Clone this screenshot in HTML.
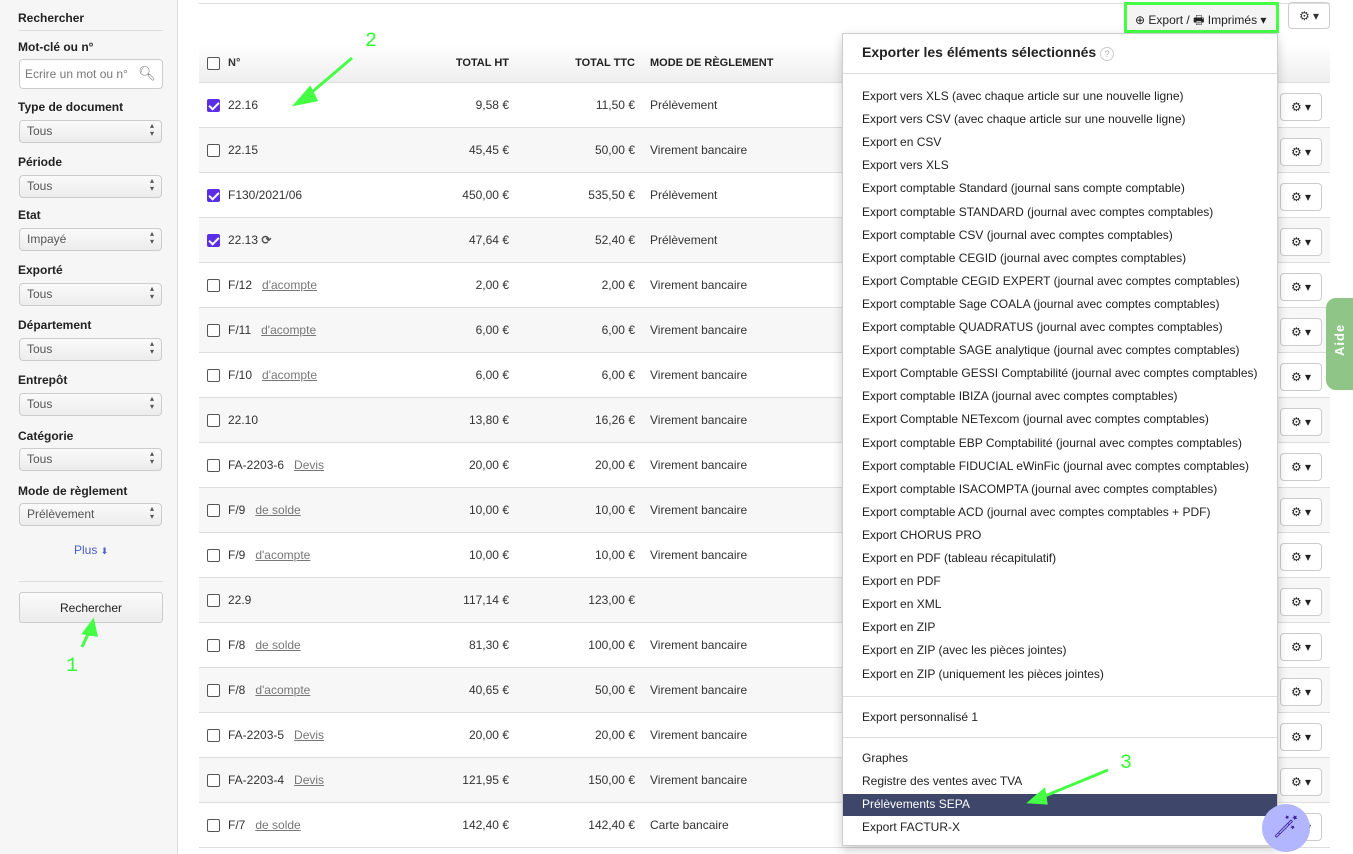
<!DOCTYPE html>
<html><head><meta charset="utf-8"><style>
*{box-sizing:border-box;margin:0;padding:0}
body{width:1353px;height:854px;overflow:hidden;background:#fff;font-family:"Liberation Sans",Arial,sans-serif;font-size:12px;color:#333;position:relative}
.side{position:absolute;left:0;top:0;width:178px;height:854px;background:#f6f6f6;border-right:1px solid #ddd}
.lbl{position:absolute;left:18px;font-weight:bold;font-size:12px;color:#222}
.sel{position:absolute;left:19px;width:143px;height:23px;border:1px solid #ccc;border-radius:4px;background:linear-gradient(#fafafa,#ececec);font-size:12px;color:#555;padding:3px 0 0 7px}
.sel:after{content:"▴\A▾";white-space:pre;position:absolute;right:7px;top:1px;font-size:8px;line-height:8px;color:#555}
.abs{position:absolute}
.row{position:absolute;left:199px;width:1131px;height:45px;border-bottom:1px solid #ddd}
.row.g{background:#f7f7f7}
.cb{position:absolute;left:8px;top:16px;width:13px;height:13px;border:1px solid #555;border-radius:2px;background:#fff}
.cb.on{background:#5a2ee6;border-color:#5a2ee6}
.cb.on:after{content:"";position:absolute;left:3px;top:0px;width:4px;height:8px;border:solid #fff;border-width:0 2px 2px 0;transform:rotate(45deg)}
.num{position:absolute;left:29px;top:15px;color:#333}
.lk{color:#777;text-decoration:underline;margin-left:10px}
.ht{position:absolute;right:821px;top:15px}
.ttc{position:absolute;right:695px;top:15px}
.mode{position:absolute;left:451px;top:15px}
.gear{position:absolute;left:1081px;top:10px;width:42px;height:28px;border:1px solid #ccc;border-radius:4px;background:#fff;font-size:12px;text-align:center;padding-top:6px;color:#222}
.dd{position:absolute;left:842px;top:33px;width:436px;height:813px;background:#fff;border:1px solid #ccc;box-shadow:0 4px 10px rgba(0,0,0,.2)}
.it{position:absolute;left:19px;font-size:12px;color:#222;white-space:nowrap}
.sep{position:absolute;left:0;width:100%;border-top:1px solid #ddd}
.gr{color:#3f3;font-family:"Liberation Mono",monospace;font-size:20px}
</style></head><body>
<div class="side">
<div class="lbl" style="top:11px">Rechercher</div>
<div class="abs" style="left:19px;top:30px;width:144px;border-top:1px solid #ddd"></div>
<div class="lbl" style="top:40px">Mot-clé ou n°</div>
<div class="abs" style="left:19px;top:59px;width:144px;height:30px;border:1px solid #ccc;border-radius:4px;background:#fff;color:#777;padding:7px 0 0 5px">Ecrire un mot ou n°<span style="position:absolute;right:6px;top:5px;font-size:14px;color:#777">&#x1F50D;&#xFE0E;</span></div>
<div class="lbl" style="top:100px">Type de document</div><div class="sel" style="top:120px">Tous</div>
<div class="lbl" style="top:155px">Période</div><div class="sel" style="top:175px">Tous</div>
<div class="lbl" style="top:208px">Etat</div><div class="sel" style="top:228px">Impayé</div>
<div class="lbl" style="top:263px">Exporté</div><div class="sel" style="top:283px">Tous</div>
<div class="lbl" style="top:318px">Département</div><div class="sel" style="top:338px">Tous</div>
<div class="lbl" style="top:373px">Entrepôt</div><div class="sel" style="top:393px">Tous</div>
<div class="lbl" style="top:429px">Catégorie</div><div class="sel" style="top:448px">Tous</div>
<div class="lbl" style="top:484px">Mode de règlement</div><div class="sel" style="top:503px">Prélèvement</div>
<div class="abs" style="left:74px;top:543px;color:#4a5fc1">Plus <span style="font-size:9px">⬇</span></div>
<div class="abs" style="left:19px;top:581px;width:144px;border-top:1px solid #ddd"></div>
<div class="abs" style="left:19px;top:592px;width:144px;height:31px;border:1px solid #ccc;border-radius:3px;background:linear-gradient(#fafafa,#ececec);text-align:center;padding-top:8px;color:#222">Rechercher</div>
</div>
<div class="abs" style="left:199px;top:0;width:1131px;height:4px;border-bottom:1px solid #ddd"></div>
<div class="abs" style="left:1124px;top:2px;width:155px;height:31px;border:3px solid #4f4;background:#f4f4f4;padding:6px 0 0 8px;color:#222">⊕ Export / 🖶&#xFE0E; Imprimés ▾</div>
<div class="abs" style="left:1288px;top:2px;width:42px;height:27px;border:1px solid #ccc;border-radius:4px;text-align:center;padding-top:6px">⚙ ▾</div>
<div class="row" style="top:45px;height:38px;background:linear-gradient(#fff,#eee);font-weight:bold;font-size:11px;color:#222">
<div class="cb" style="top:12px"></div><div class="num" style="top:12px">N°</div>
<div class="ht" style="top:12px">TOTAL HT</div><div class="ttc" style="top:12px">TOTAL TTC</div><div class="mode" style="top:12px">MODE DE RÈGLEMENT</div></div>
<div id="rows"></div>
<div class="abs" style="left:1326px;top:298px;width:27px;height:92px;background:#8fc586;border-radius:10px 0 0 10px;color:#fff;font-weight:bold;font-size:13px"><div style="position:absolute;left:6px;top:58px;transform:rotate(-90deg);transform-origin:0 0;letter-spacing:1px">Aide</div></div>
<div class="dd">
<div class="abs" style="left:19px;top:10px;font-weight:bold;font-size:14px;color:#222">Exporter les éléments sélectionnés <span style="display:inline-block;width:14px;height:14px;border:1px solid #ccc;border-radius:7px;font-size:9px;color:#aaa;text-align:center;font-weight:normal;line-height:12px">?</span></div>
<div class="sep" style="top:39px"></div>
<div id="items"></div>
<div class="sep" style="top:662px"></div>
<div class="it" style="top:676px">Export personnalisé 1</div>
<div class="sep" style="top:703px"></div>
<div class="it" style="top:717px">Graphes</div>
<div class="it" style="top:740px">Registre des ventes avec TVA</div>
<div class="abs" style="left:0;top:760px;width:100%;height:22px;background:#3e4669"></div>
<div class="it" style="top:763px;color:#fff">Prélèvements SEPA</div>
<div class="it" style="top:786px">Export FACTUR-X</div>
</div>
<div class="abs" style="left:1262px;top:804px;width:48px;height:48px;border-radius:24px;background:#b2b6ff;color:#3a1f9a;font-size:22px;text-align:center;padding-top:10px">🪄&#xFE0E;</div>
<div class="abs gr" style="left:365px;top:30px">2</div>
<div class="abs gr" style="left:66px;top:655px">1</div>
<div class="abs gr" style="left:1120px;top:752px">3</div>
<svg class="abs" style="left:0;top:0" width="1353" height="854"><g stroke="#4f4" stroke-width="3" fill="#4f4">
<line x1="352" y1="58" x2="305" y2="98"/><polygon points="296,104 310,88 316,100"/>
<line x1="82" y1="647" x2="90" y2="630"/><polygon points="93,621 84,633 96,635"/>
<line x1="1108" y1="770" x2="1040" y2="798"/><polygon points="1030,802 1044,790 1046,803"/></g></svg>
<script>
var R=[["22.16","",1,"9,58 €","11,50 €","Prélèvement"],["22.15","",0,"45,45 €","50,00 €","Virement bancaire"],["F130/2021/06","",1,"450,00 €","535,50 €","Prélèvement"],["22.13 <b style='color:#555'>⟳</b>","",1,"47,64 €","52,40 €","Prélèvement"],["F/12","d'acompte",0,"2,00 €","2,00 €","Virement bancaire"],["F/11","d'acompte",0,"6,00 €","6,00 €","Virement bancaire"],["F/10","d'acompte",0,"6,00 €","6,00 €","Virement bancaire"],["22.10","",0,"13,80 €","16,26 €","Virement bancaire"],["FA-2203-6","Devis",0,"20,00 €","20,00 €","Virement bancaire"],["F/9","de solde",0,"10,00 €","10,00 €","Virement bancaire"],["F/9","d'acompte",0,"10,00 €","10,00 €","Virement bancaire"],["22.9","",0,"117,14 €","123,00 €",""],["F/8","de solde",0,"81,30 €","100,00 €","Virement bancaire"],["F/8","d'acompte",0,"40,65 €","50,00 €","Virement bancaire"],["FA-2203-5","Devis",0,"20,00 €","20,00 €","Virement bancaire"],["FA-2203-4","Devis",0,"121,95 €","150,00 €","Virement bancaire"],["F/7","de solde",0,"142,40 €","142,40 €","Carte bancaire"]];
var h="";R.forEach(function(r,i){h+='<div class="row'+(i%2?' g':'')+'" style="top:'+(83+45*i)+'px"><div class="cb'+(r[2]?' on':'')+'"></div><div class="num">'+r[0]+(r[1]?'<span class="lk">'+r[1]+'</span>':'')+'</div><div class="ht">'+r[3]+'</div><div class="ttc">'+r[4]+'</div><div class="mode">'+r[5]+'</div><div class="gear">⚙ ▾</div></div>'});
document.getElementById("rows").innerHTML=h;
var I=["Export vers XLS (avec chaque article sur une nouvelle ligne)","Export vers CSV (avec chaque article sur une nouvelle ligne)","Export en CSV","Export vers XLS","Export comptable Standard (journal sans compte comptable)","Export comptable STANDARD (journal avec comptes comptables)","Export comptable CSV (journal avec comptes comptables)","Export comptable CEGID (journal avec comptes comptables)","Export Comptable CEGID EXPERT (journal avec comptes comptables)","Export comptable Sage COALA (journal avec comptes comptables)","Export comptable QUADRATUS (journal avec comptes comptables)","Export comptable SAGE analytique (journal avec comptes comptables)","Export Comptable GESSI Comptabilité (journal avec comptes comptables)","Export comptable IBIZA (journal avec comptes comptables)","Export Comptable NETexcom (journal avec comptes comptables)","Export comptable EBP Comptabilité (journal avec comptes comptables)","Export comptable FIDUCIAL eWinFic (journal avec comptes comptables)","Export comptable ISACOMPTA (journal avec comptes comptables)","Export comptable ACD (journal avec comptes comptables + PDF)","Export CHORUS PRO","Export en PDF (tableau récapitulatif)","Export en PDF","Export en XML","Export en ZIP","Export en ZIP (avec les pièces jointes)","Export en ZIP (uniquement les pièces jointes)"];
var s="";I.forEach(function(t,i){s+='<div class="it" style="top:'+(55+23.1*i)+'px">'+t+'</div>'});
document.getElementById("items").innerHTML=s;
</script>
</body></html>
